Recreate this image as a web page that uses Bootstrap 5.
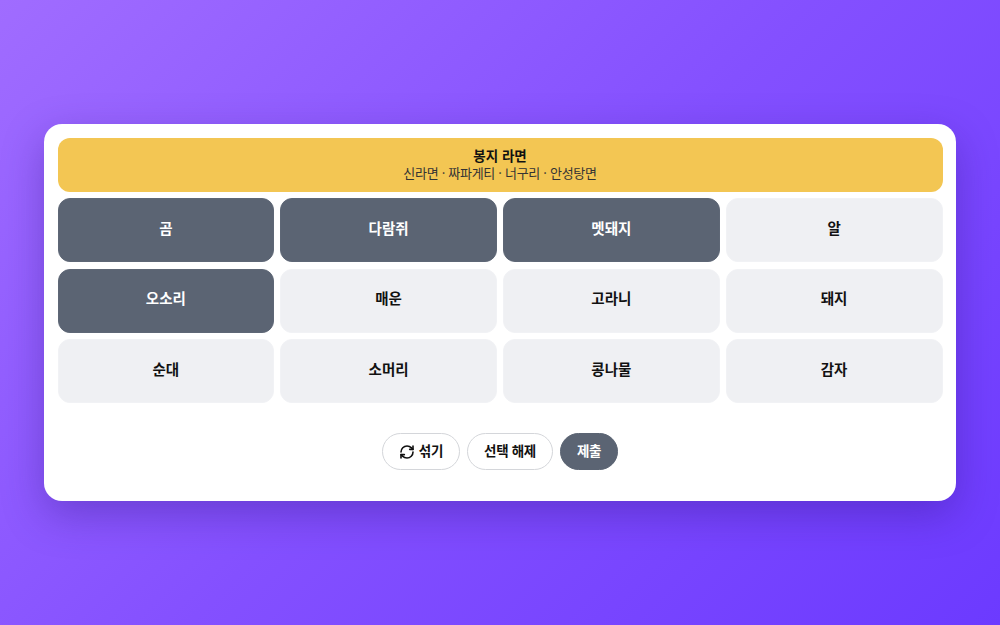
<!doctype html>
<html lang="ko"><head><meta charset="utf-8">
<link href="https://cdn.jsdelivr.net/npm/bootstrap@5.3.0/dist/css/bootstrap.min.css" rel="stylesheet">
<style>
html,body{height:100%}
body{background:linear-gradient(135deg,#a06cff 0%,#8450ff 50%,#6c3aff 100%);font-family:"Noto Sans CJK KR",sans-serif;color:#111}
.stage{height:625px}
.panel{width:912px;background:#fff;border-radius:18px;padding:14px 13.5px 31px;box-shadow:0 14px 40px rgba(50,20,130,.35)}
.catbar{background:#f3c653;border-radius:12px;height:54px;font-size:13px;letter-spacing:-.3px;line-height:18px;color:#333;padding-bottom:2px}
.catbar b{font-weight:700;font-size:13.5px;letter-spacing:0;color:#111;line-height:17px}
.grid4{display:grid;grid-template-columns:repeat(4,1fr);grid-template-rows:64px 64px 64px;gap:6.5px 6px;margin-top:6px}
.tile{border-radius:12px;background:#eff0f3;border:1px solid #f1f2f5;font-weight:700;font-size:14.5px;display:flex;align-items:center;justify-content:center;color:#111;padding-bottom:5px}
.tile.on{background:#5b6473;border-color:#5e6776;color:#fff}
.acts{margin-top:30px;gap:7px}
.pill{height:37px;border-radius:19px;border:1px solid #d4d6da;background:#fff;font-weight:700;font-size:13.5px;letter-spacing:-.3px;padding:0 16px 3px;display:flex;align-items:center;gap:4px;color:#111}
.pill svg{margin-top:3px}
.pill.dark{background:#5b6473;border-color:#5b6473;color:#fff}
</style></head><body>
<div class="stage d-flex align-items-center justify-content-center">
<div class="panel">
<div class="catbar d-flex flex-column align-items-center justify-content-center"><b>봉지 라면</b><span>신라면 · 짜파게티 · 너구리 · 안성탕면</span></div>
<div class="grid4">
<div class="tile on">곰</div><div class="tile on">다람쥐</div><div class="tile on">멧돼지</div><div class="tile">알</div>
<div class="tile on">오소리</div><div class="tile">매운</div><div class="tile">고라니</div><div class="tile">돼지</div>
<div class="tile">순대</div><div class="tile">소머리</div><div class="tile">콩나물</div><div class="tile">감자</div>
</div>
<div class="acts d-flex justify-content-center">
<button class="pill"><svg width="16" height="16" viewBox="0 0 24 24" fill="none" stroke="currentColor" stroke-width="2.4" stroke-linecap="round" stroke-linejoin="round"><path d="M3 12a9 9 0 0 1 9-9 9.75 9.75 0 0 1 6.74 2.74L21 8"/><path d="M21 3v5h-5"/><path d="M21 12a9 9 0 0 1-9 9 9.75 9.75 0 0 1-6.74-2.74L3 16"/><path d="M8 16H3v5"/></svg>섞기</button>
<button class="pill">선택 해제</button>
<button class="pill dark">제출</button>
</div>
</div></div>
<script src="https://cdn.jsdelivr.net/npm/bootstrap@5.3.0/dist/js/bootstrap.bundle.min.js"></script>
</body></html>
